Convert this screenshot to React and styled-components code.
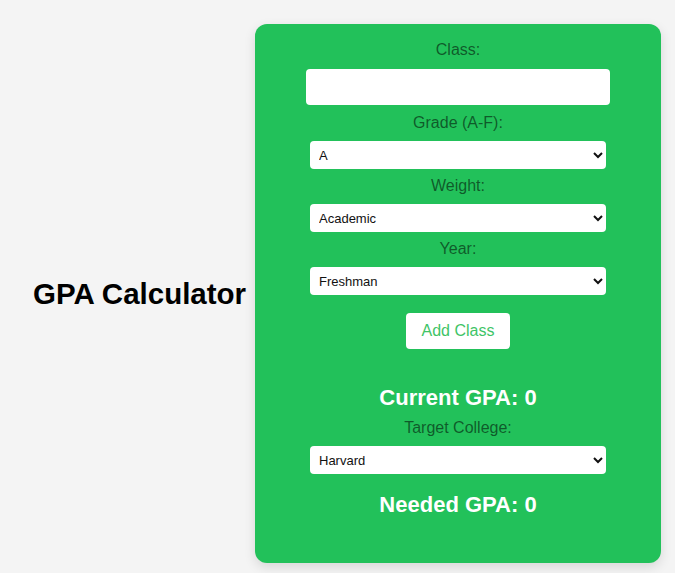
import React from 'react'
import styled, { createGlobalStyle } from 'styled-components'

const GlobalStyle = createGlobalStyle`
  body {
    margin: 0;
    background: #f4f4f4;
    font-family: "Liberation Sans", Arial, sans-serif;
  }
`

const Page = styled.div`
  display: flex;
  align-items: center;
  padding: 24px 0 10px 33px;
`

const Title = styled.h1`
  width: 213px;
  margin: 0 9px 0 0;
  font-size: 29.5px;
  font-weight: 700;
  color: #000;
  white-space: nowrap;
`

const Card = styled.div`
  width: 406px;
  box-sizing: border-box;
  background: #22c15a;
  border-radius: 12px;
  box-shadow: 0 4px 12px rgba(0, 0, 0, 0.12);
  padding: 17px 0 46px;
  display: flex;
  flex-direction: column;
  align-items: center;
`

const Label = styled.label`
  font-size: 16px;
  line-height: 18px;
  color: rgba(0, 0, 0, 0.55);
  margin-bottom: ${p => p.$gap || 9}px;
`

const TextInput = styled.input`
  width: 304px;
  height: 36px;
  box-sizing: border-box;
  border: none;
  border-radius: 4px;
  background: #fff;
  margin-bottom: 9px;
  outline: none;
`

const Select = styled.select`
  width: 296px;
  height: 28px;
  box-sizing: border-box;
  border: none;
  border-radius: 4px;
  background: #fff;
  padding: 0 4px 0 5px;
  font-family: "Liberation Sans", Arial, sans-serif;
  font-size: 13px;
  color: #111;
  margin-bottom: ${p => p.$after || 8}px;
`

const Button = styled.button`
  width: 104px;
  height: 36px;
  border: none;
  border-radius: 4px;
  background: #fff;
  color: #3fc467;
  font-family: "Liberation Sans", Arial, sans-serif;
  font-size: 16px;
  cursor: pointer;
  margin-bottom: 36px;
`

const Result = styled.h2`
  margin: 0 0 ${p => p.$after || 0}px;
  font-size: 22px;
  line-height: 25px;
  font-weight: 700;
  color: #fff;
`

export default function App() {
  return (
    <>
      <GlobalStyle />
      <Page>
        <Title>GPA Calculator</Title>
        <Card>
          <Label $gap={10}>Class:</Label>
          <TextInput type="text" />
          <Label>Grade (A-F):</Label>
          <Select defaultValue="A">
            <option>A</option>
            <option>B</option>
            <option>C</option>
            <option>D</option>
            <option>F</option>
          </Select>
          <Label>Weight:</Label>
          <Select defaultValue="Academic">
            <option>Academic</option>
            <option>Honors</option>
            <option>AP</option>
          </Select>
          <Label>Year:</Label>
          <Select defaultValue="Freshman" $after={18}>
            <option>Freshman</option>
            <option>Sophomore</option>
            <option>Junior</option>
            <option>Senior</option>
          </Select>
          <Button>Add Class</Button>
          <Result $after={9}>Current GPA: 0</Result>
          <Label>Target College:</Label>
          <Select defaultValue="Harvard" $after={18}>
            <option>Harvard</option>
            <option>Stanford</option>
            <option>MIT</option>
            <option>Yale</option>
          </Select>
          <Result>Needed GPA: 0</Result>
        </Card>
      </Page>
    </>
  )
}
